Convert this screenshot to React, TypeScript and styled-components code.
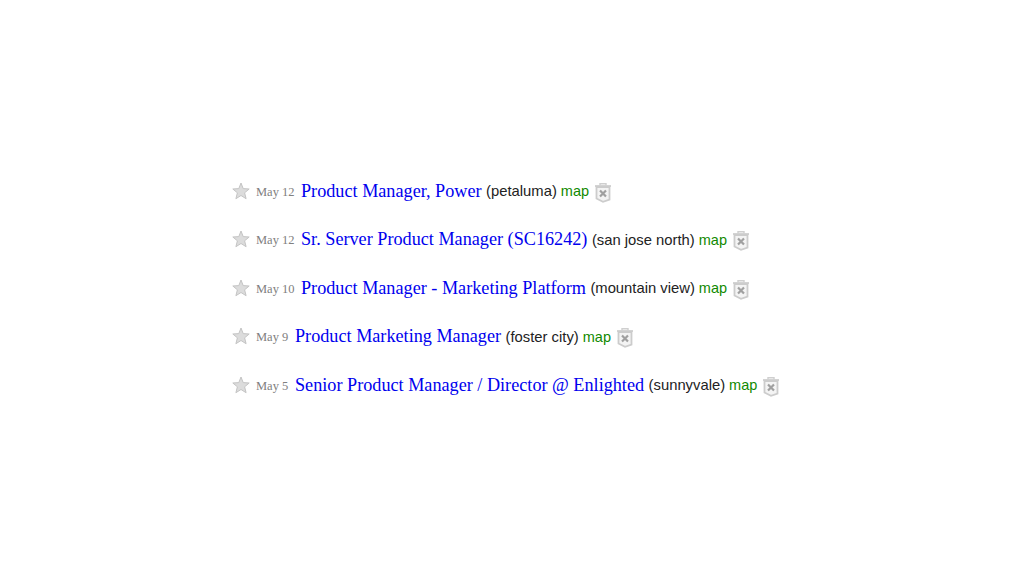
import React from 'react';
import styled, { createGlobalStyle } from 'styled-components';

const GlobalStyle = createGlobalStyle`
    html, body {
        margin: 0;
        padding: 0;
        background: #fff;
    }
`;

const Page = styled.div`
    width: 1024px;
    height: 576px;
    padding: 167px 0 0 232px;
    box-sizing: border-box;
    overflow: hidden;
`;

const Row = styled.div`
    display: flex;
    align-items: center;
    height: 48.5px;
`;

const Star = styled.svg`
    width: 18px;
    height: 18px;
    margin-bottom: 1px;
    flex: none;
`;

const DateText = styled.span`
    margin-left: 6px;
    width: ${(p: { $wide: boolean }) => (p.$wide ? '45px' : '39px')};
    flex: none;
    padding-top: 2px;
    font-family: 'Liberation Serif', serif;
    font-size: 12.5px;
    color: #808080;
    white-space: nowrap;
`;

const Title = styled.a`
    font-family: 'Liberation Serif', serif;
    font-size: 18.2px;
    color: #0000ee;
    white-space: nowrap;
`;

const Location = styled.span`
    margin-left: 4.5px;
    font-family: 'Liberation Sans', sans-serif;
    font-size: 14.8px;
    color: #222;
    white-space: nowrap;
`;

const MapLink = styled.span`
    margin-left: 4px;
    font-family: 'Liberation Sans', sans-serif;
    font-size: 14.5px;
    color: #118a00;
`;

const Trash = styled.svg`
    margin-left: 5px;
    margin-top: 2px;
    width: 18px;
    height: 21px;
    flex: none;
`;

const jobs = [
    { date: 'May 12', title: 'Product Manager, Power', place: '(petaluma)' },
    { date: 'May 12', title: 'Sr. Server Product Manager (SC16242)', place: '(san jose north)' },
    { date: 'May 10', title: 'Product Manager - Marketing Platform', place: '(mountain view)' },
    { date: 'May 9', title: 'Product Marketing Manager', place: '(foster city)' },
    { date: 'May 5', title: 'Senior Product Manager / Director @ Enlighted', place: '(sunnyvale)' },
];

function App() {
    return (
        <Page>
            <GlobalStyle />
            {jobs.map((job) => (
                <Row key={job.title}>
                    <Star viewBox="0 0 18 18">
                        <path
                            d="M9 1l2.2 5.6 6 .4-4.6 3.8 1.5 5.9L9 13.5l-5.1 3.2 1.5-5.9L.8 7l6-.4z"
                            fill="#dcdcdc"
                            stroke="#c4c4c4"
                            strokeWidth="1"
                        />
                    </Star>
                    <DateText $wide={job.date.length > 5}>{job.date}</DateText>
                    <Title>{job.title}</Title>
                    <Location>{job.place}</Location>
                    <MapLink>map</MapLink>
                    <Trash viewBox="0 0 18 21">
                        <path d="M6 3.5V1.8h6v1.7" fill="none" stroke="#cfcfcf" strokeWidth="1.4" />
                        <path d="M1 4h16" stroke="#cfcfcf" strokeWidth="1.8" />
                        <path
                            d="M2.5 5v11.5L9 19.8l6.5-2.3V5z"
                            fill="#f4f4f4"
                            stroke="#cccccc"
                            strokeWidth="1.8"
                        />
                        <path d="M6 8.5l6 6M12 8.5l-6 6" stroke="#a0a0a0" strokeWidth="2.2" />
                    </Trash>
                </Row>
            ))}
        </Page>
    );
}

export default App;
